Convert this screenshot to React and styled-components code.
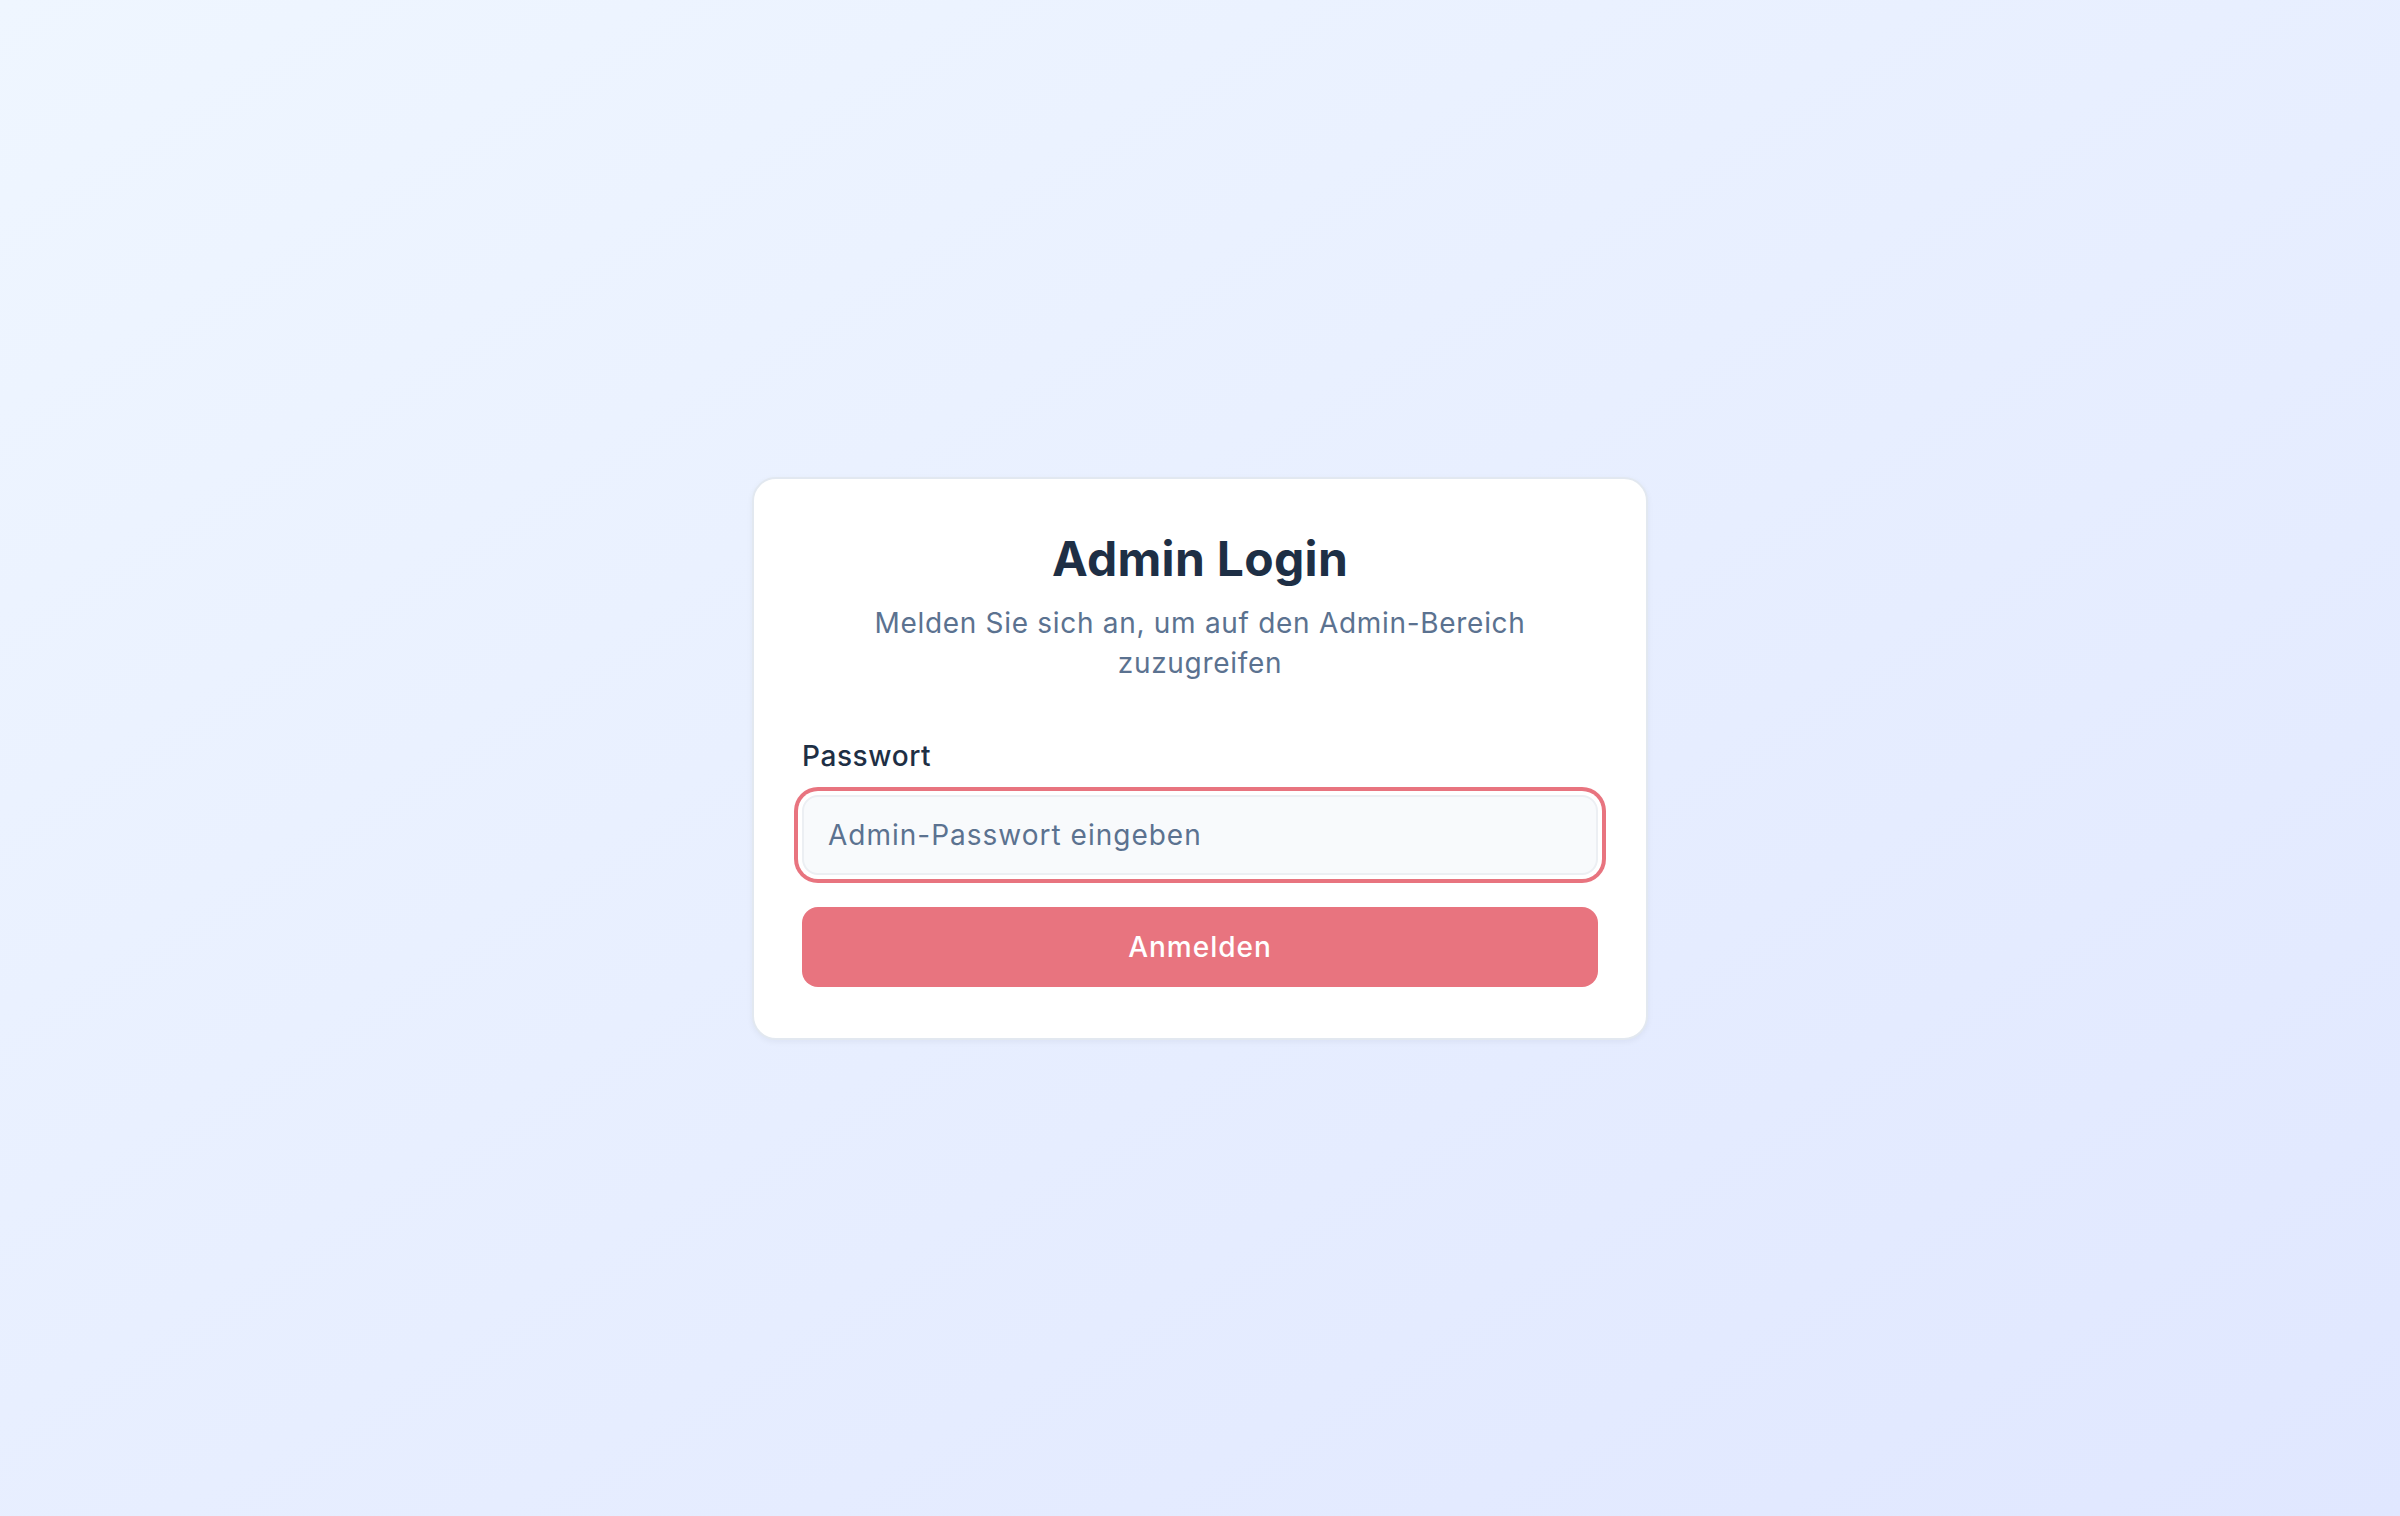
import React from "react";
import styled, { createGlobalStyle } from "styled-components";

const GlobalStyle = createGlobalStyle`
  * {
    box-sizing: border-box;
  }
  html, body {
    margin: 0;
    padding: 0;
  }
  body {
    font-family: Inter, "Noto Sans", sans-serif;
  }
`;

const Page = styled.div`
  min-height: 100vh;
  display: flex;
  align-items: center;
  justify-content: center;
  background: linear-gradient(to bottom right, #eff6ff, #e0e7ff);
`;

const Card = styled.div`
  width: 896px;
  background: #ffffff;
  border: 2px solid #e2e8f0;
  border-radius: 24px;
  padding: 48px 48px 51px;
  box-shadow: 0 2px 6px rgba(15, 23, 42, 0.05);
`;

const Header = styled.div`
  display: flex;
  flex-direction: column;
  align-items: center;
  text-align: center;
  gap: 12px;
`;

const Title = styled.h1`
  margin: 0;
  font-size: 48px;
  line-height: 64px;
  font-weight: 700;
  letter-spacing: 0.3px;
  color: #1e2f45;
`;

const Subtitle = styled.p`
  margin: 0;
  max-width: 700px;
  font-size: 28px;
  line-height: 40px;
  letter-spacing: 0.7px;
  color: #5b7290;
`;

const Form = styled.form`
  display: flex;
  flex-direction: column;
  margin-top: 53px;
`;

const Field = styled.div`
  display: flex;
  flex-direction: column;
  gap: 19px;
`;

const Label = styled.label`
  font-size: 28px;
  line-height: 40px;
  font-weight: 500;
  letter-spacing: 0.6px;
  color: #1e2f45;
`;

const Input = styled.input`
  height: 80px;
  width: 100%;
  padding: 0 24px;
  font-family: inherit;
  font-size: 28px;
  letter-spacing: 1px;
  color: #1e2f45;
  background: #f8fafc;
  border: 2px solid #eceff3;
  border-radius: 16px;
  outline: none;
  box-shadow: ${({ $focused }) =>
    $focused ? "0 0 0 4px #ffffff, 0 0 0 8px #e8747f" : "none"};

  &::placeholder {
    color: #5b7290;
  }
`;

const Button = styled.button`
  margin-top: 32px;
  height: 80px;
  width: 100%;
  border: none;
  border-radius: 16px;
  background: #e8747f;
  color: #ffffff;
  font-family: inherit;
  font-size: 28px;
  font-weight: 500;
  letter-spacing: 1px;
  cursor: pointer;
`;

export default function App() {
  return (
    <Page>
      <GlobalStyle />
      <Card>
        <Header>
          <Title>Admin Login</Title>
          <Subtitle>
            Melden Sie sich an, um auf den Admin-Bereich zuzugreifen
          </Subtitle>
        </Header>
        <Form onSubmit={(e) => e.preventDefault()}>
          <Field>
            <Label htmlFor="password">Passwort</Label>
            <Input
              id="password"
              type="password"
              placeholder="Admin-Passwort eingeben"
              $focused
            />
          </Field>
          <Button type="submit">Anmelden</Button>
        </Form>
      </Card>
    </Page>
  );
}
